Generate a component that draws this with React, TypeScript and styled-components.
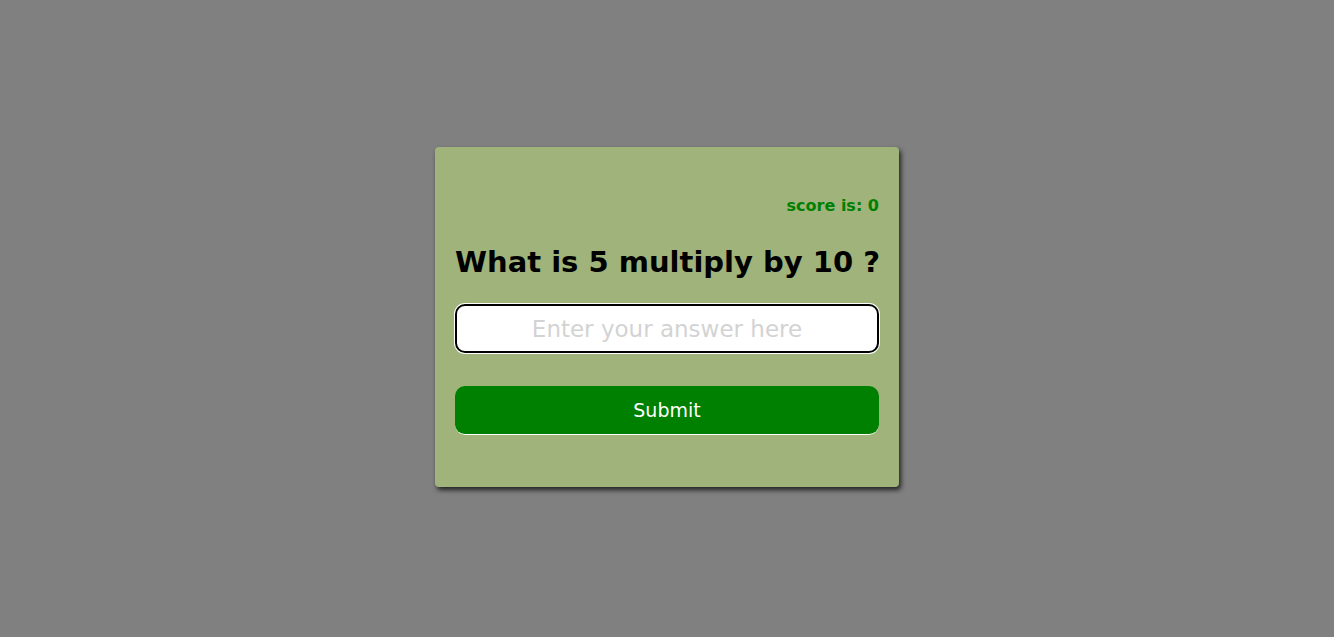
import React, { useState } from "react";
import styled, { createGlobalStyle } from "styled-components";

const GlobalStyle = createGlobalStyle`
  html, body {
    margin: 0;
    padding: 0;
    background: #808080;
    font-family: "Comic Sans MS", "DejaVu Sans", sans-serif;
  }
  * {
    box-sizing: border-box;
  }
`;

const Page = styled.div`
  height: 100vh;
  width: 100vw;
  padding-bottom: 3px;
  display: flex;
  align-items: center;
  justify-content: center;
`;

const Card = styled.div`
  width: 464px;
  height: 340px;
  background: #9fb37a;
  border-radius: 4px;
  box-shadow: 2px 3px 5px rgba(0, 0, 0, 0.75);
  padding: 47px 20px 20px;
  display: flex;
  flex-direction: column;
`;

const Score = styled.p`
  margin: 0;
  text-align: right;
  color: #008000;
  font-weight: 700;
  font-size: 16px;
  line-height: 24px;
`;

const Question = styled.h1`
  margin: 25px 0 0;
  text-align: center;
  white-space: nowrap;
  font-size: 29px;
  line-height: 38px;
  font-weight: 700;
  color: #000;
`;

const AnswerInput = styled.input`
  margin-top: 23px;
  width: 100%;
  height: 49px;
  border: 2px solid #000;
  border-radius: 10px;
  box-shadow: 0 0 0 1px #fff;
  background: #fff;
  text-align: center;
  font-family: inherit;
  font-size: 23px;
  outline: none;

  &::placeholder {
    color: #d3d3d3;
  }
`;

const SubmitButton = styled.button`
  margin-top: 33px;
  width: 100%;
  height: 49px;
  flex-shrink: 0;
  border: none;
  border-bottom: 1px solid #fff;
  border-radius: 10px;
  background: #008000;
  color: #fff;
  font-family: inherit;
  font-size: 19px;
  cursor: pointer;
`;

export default function App() {
  const [score] = useState(0);
  const [answer, setAnswer] = useState("");

  return (
    <>
      <GlobalStyle />
      <Page>
        <Card>
          <Score>score is: {score}</Score>
          <Question>What is 5 multiply by 10 ?</Question>
          <AnswerInput
            placeholder="Enter your answer here"
            value={answer}
            onChange={(e) => setAnswer(e.target.value)}
          />
          <SubmitButton>Submit</SubmitButton>
        </Card>
      </Page>
    </>
  );
}
